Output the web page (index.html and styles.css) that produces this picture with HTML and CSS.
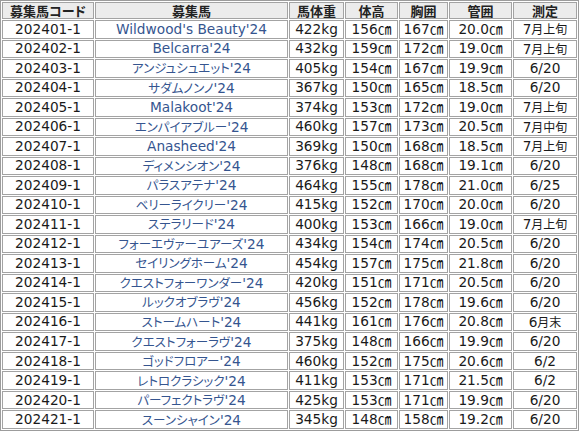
FILE: index.html
```html
<!DOCTYPE html>
<html lang="ja">
<head>
<meta charset="utf-8">
<title>募集馬一覧</title>
<link rel="stylesheet" href="styles.css">
</head>
<body>
<table class="horses">
<thead>
<tr>
<th class="c-code">募集馬コード</th>
<th class="c-name">募集馬</th>
<th class="c-wt">馬体重</th>
<th class="c-ht">体高</th>
<th class="c-chest">胸囲</th>
<th class="c-cannon">管囲</th>
<th class="c-date">測定</th>
</tr>
</thead>
<tbody>
<tr><td>202401-1</td><td class="name">Wildwood's Beauty'24</td><td>422kg</td><td>156㎝</td><td>167㎝</td><td>20.0㎝</td><td>7<span class="jp">月上旬</span></td></tr>
<tr><td>202402-1</td><td class="name">Belcarra'24</td><td>432kg</td><td>159㎝</td><td>172㎝</td><td>19.0㎝</td><td>7<span class="jp">月上旬</span></td></tr>
<tr><td>202403-1</td><td class="name"><span class="kana">アンジュシュエット</span>'24</td><td>405kg</td><td>154㎝</td><td>167㎝</td><td>19.9㎝</td><td>6/20</td></tr>
<tr><td>202404-1</td><td class="name"><span class="kana">サダムノンノ</span>'24</td><td>367kg</td><td>150㎝</td><td>165㎝</td><td>18.5㎝</td><td>6/20</td></tr>
<tr><td>202405-1</td><td class="name">Malakoot'24</td><td>374kg</td><td>153㎝</td><td>172㎝</td><td>19.0㎝</td><td>7<span class="jp">月上旬</span></td></tr>
<tr><td>202406-1</td><td class="name"><span class="kana">エンパイアブルー</span>'24</td><td>460kg</td><td>157㎝</td><td>173㎝</td><td>20.5㎝</td><td>7<span class="jp">月中旬</span></td></tr>
<tr><td>202407-1</td><td class="name">Anasheed'24</td><td>369kg</td><td>150㎝</td><td>168㎝</td><td>18.5㎝</td><td>7<span class="jp">月上旬</span></td></tr>
<tr><td>202408-1</td><td class="name"><span class="kana">ディメンシオン</span>'24</td><td>376kg</td><td>148㎝</td><td>168㎝</td><td>19.1㎝</td><td>6/20</td></tr>
<tr><td>202409-1</td><td class="name"><span class="kana">パラスアテナ</span>'24</td><td>464kg</td><td>155㎝</td><td>178㎝</td><td>21.0㎝</td><td>6/25</td></tr>
<tr><td>202410-1</td><td class="name"><span class="kana">ベリーライクリー</span>'24</td><td>415kg</td><td>152㎝</td><td>170㎝</td><td>20.0㎝</td><td>6/20</td></tr>
<tr><td>202411-1</td><td class="name"><span class="kana">ステラリード</span>'24</td><td>400kg</td><td>153㎝</td><td>166㎝</td><td>19.0㎝</td><td>7<span class="jp">月上旬</span></td></tr>
<tr><td>202412-1</td><td class="name"><span class="kana">フォーエヴァーユアーズ</span>'24</td><td>434kg</td><td>154㎝</td><td>174㎝</td><td>20.5㎝</td><td>6/20</td></tr>
<tr><td>202413-1</td><td class="name"><span class="kana">セイリングホーム</span>'24</td><td>454kg</td><td>157㎝</td><td>175㎝</td><td>21.8㎝</td><td>6/20</td></tr>
<tr><td>202414-1</td><td class="name"><span class="kana">クエストフォーワンダー</span>'24</td><td>420kg</td><td>151㎝</td><td>171㎝</td><td>20.5㎝</td><td>6/20</td></tr>
<tr><td>202415-1</td><td class="name"><span class="kana">ルックオブラヴ</span>'24</td><td>456kg</td><td>152㎝</td><td>178㎝</td><td>19.6㎝</td><td>6/20</td></tr>
<tr><td>202416-1</td><td class="name"><span class="kana">ストームハート</span>'24</td><td>441kg</td><td>161㎝</td><td>176㎝</td><td>20.8㎝</td><td>6<span class="jp">月末</span></td></tr>
<tr><td>202417-1</td><td class="name"><span class="kana">クエストフォーラヴ</span>'24</td><td>375kg</td><td>148㎝</td><td>166㎝</td><td>19.9㎝</td><td>6/20</td></tr>
<tr><td>202418-1</td><td class="name"><span class="kana">ゴッドフロアー</span>'24</td><td>460kg</td><td>152㎝</td><td>175㎝</td><td>20.6㎝</td><td>6/2</td></tr>
<tr><td>202419-1</td><td class="name"><span class="kana">レトロクラシック</span>'24</td><td>411kg</td><td>153㎝</td><td>171㎝</td><td>21.5㎝</td><td>6/2</td></tr>
<tr><td>202420-1</td><td class="name"><span class="kana">パーフェクトラヴ</span>'24</td><td>425kg</td><td>153㎝</td><td>171㎝</td><td>19.9㎝</td><td>6/20</td></tr>
<tr><td>202421-1</td><td class="name"><span class="kana">スーンシャイン</span>'24</td><td>345kg</td><td>148㎝</td><td>158㎝</td><td>19.2㎝</td><td>6/20</td></tr>
</tbody>
</table>
</body>
</html>
```

FILE: styles.css
```css
html, body {
  margin: 0;
  padding: 0;
  background: #ffffff;
}

.horses {
  width: 579px;
  height: 431px;
  table-layout: fixed;
  border-collapse: separate;
  border-spacing: 1px;
  border: 1px solid #9c9c9c;
  font-family: "DejaVu Sans", "Noto Sans CJK JP", sans-serif;
  font-size: 13.7px;
  color: #1a1a1a;
}

.horses th,
.horses td {
  box-sizing: border-box;
  border: 1px solid #a3a3a3;
  padding: 0 1px;
  text-align: center;
  white-space: nowrap;
  line-height: 15px;
}

.horses th {
  background: #ececec;
  font-family: "Noto Sans CJK JP", sans-serif;
  font-size: 13px;
  font-weight: bold;
  font-feature-settings: "palt";
  color: #222222;
}

.horses td.name {
  color: #35558f;
}

.kana {
  font-family: "Noto Sans CJK JP", sans-serif;
  font-size: 12.5px;
  font-feature-settings: "palt";
}

.jp {
  font-family: "Noto Sans CJK JP", sans-serif;
  font-size: 12px;
}

.c-code { width: 92px; }
.c-name { width: 193px; }
.c-wt { width: 55px; }
.c-ht { width: 53px; }
.c-chest { width: 49px; }
.c-cannon { width: 63px; }
```
